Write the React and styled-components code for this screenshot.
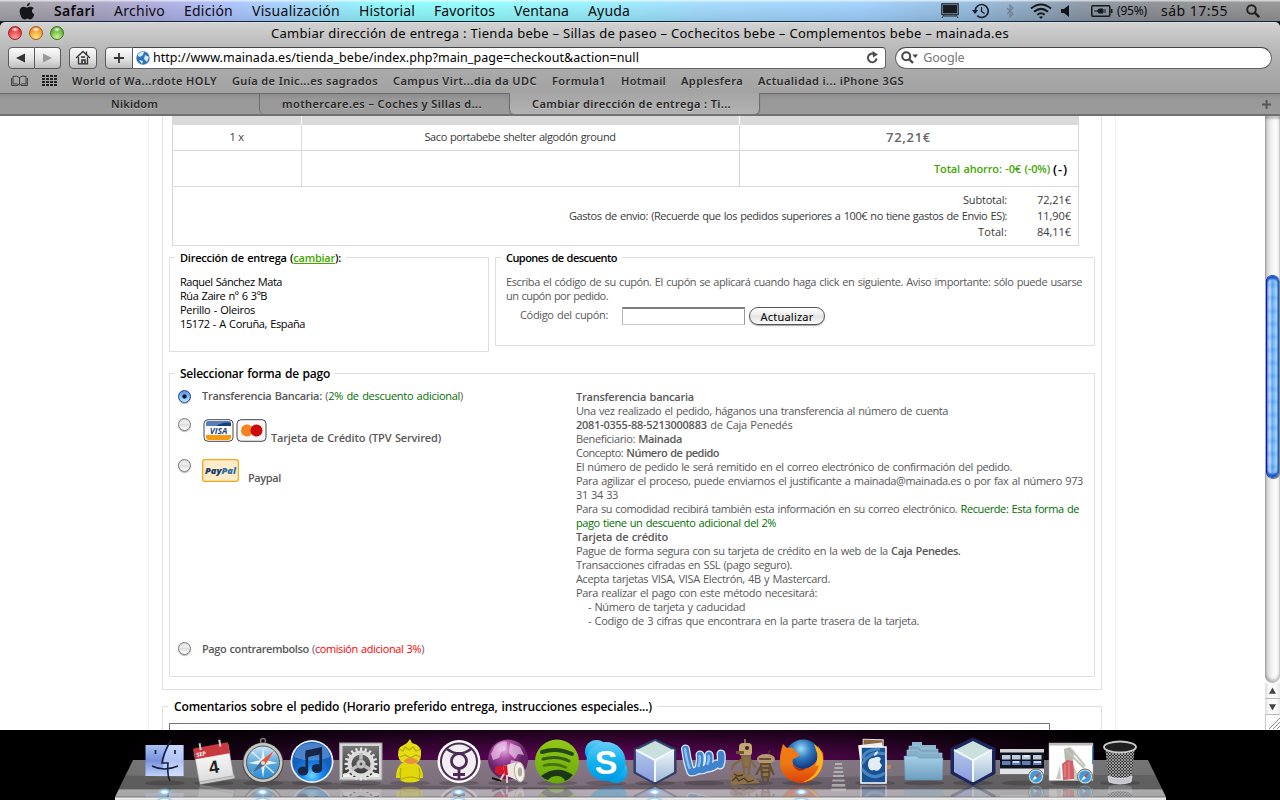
import React, { useLayoutEffect, useRef, useState } from 'react';
import styled, { createGlobalStyle, css } from 'styled-components';

const GlobalStyle = createGlobalStyle`
  * { box-sizing: border-box; }
  html, body { margin: 0; padding: 0; }
  body { width: 1280px; height: 800px; overflow: hidden; background: #000; }
`;

const ui = '"Noto Sans", "Open Sans", sans-serif';
const web = '"Open Sans", "Noto Sans", sans-serif';

/* ---------- text that is tracked to a given measure ---------- */

const Run = styled.span`
  display: inline-block;
  white-space: pre;
  flex: none;
  font-weight: ${(p) => (p.$bold ? 600 : 'inherit')};
  font-size: ${(p) => (p.$size ? `${p.$size}px` : 'inherit')};
  color: ${(p) => p.$color || 'inherit'};
`;

const Strong = styled.b`
  font-weight: 600;
`;

function Fit({ w, bold, size, color, children }) {
  const ref = useRef(null);
  const [tracking, setTracking] = useState(0);
  useLayoutEffect(() => {
    const el = ref.current;
    const natural = el.getBoundingClientRect().width;
    setTracking((w - natural) / el.textContent.length);
  }, [w]);
  return (
    <Run ref={ref} $bold={bold} $size={size} $color={color} style={{ letterSpacing: `${tracking}px` }}>
      {children}
    </Run>
  );
}

/* ---------- menu bar ---------- */

const Desktop = styled.div`
  display: flex;
  flex-direction: column;
  width: 1280px;
  height: 800px;
  overflow: hidden;
  background: #000;
`;

const MenuBar = styled.header`
  display: flex;
  align-items: center;
  justify-content: space-between;
  height: 22px;
  padding: 0 20px 0 19px;
  border-bottom: 1px solid #10263c;
  font: 14px/20px ${ui};
  color: #0c0c10;
  background:
    linear-gradient(rgba(255, 255, 255, 0.6) 0 1px, rgba(255, 255, 255, 0.08) 2px, rgba(0, 0, 0, 0.1)),
    linear-gradient(90deg, #a3a3a8 0, #a6a1b0 60px, #abaade 150px, #abc2ff 230px, #a0dcff 310px, #8cfaff 380px, #92ffff 480px, #97f0ff 600px, #a2dcff 700px, #a0d2ff 860px, #93b9dc 980px, #8996a6 1080px, #8b8d92 1150px, #939393 1280px);
`;

const MenuGroup = styled.div`
  display: flex;
  align-items: center;
  gap: 19px;
`;

const Extras = styled.div`
  display: flex;
  align-items: center;
`;

const Extra = styled.div`
  display: flex;
  width: ${(p) => p.$w}px;
  margin-left: ${(p) => p.$ml || 0}px;
`;

/* ---------- browser window ---------- */

const Chrome = styled.div`
  height: 71px;
  border-radius: 5px 5px 0 0;
  background: linear-gradient(#d2d2d2, #bababa 24px, #a9a9a9 50px, #a3a3a3);
  border-top: 1px solid #dedede;
`;

const TitleBar = styled.div`
  position: relative;
  display: flex;
  justify-content: center;
  height: 23px;
  font: 13px/21px ${ui};
  color: #050505;
`;

const Lights = styled.div`
  position: absolute;
  left: 8px;
  top: 3px;
  display: flex;
  gap: 7px;
`;

const Light = styled.span`
  width: 14px;
  height: 14px;
  border-radius: 50%;
  border: 1px solid ${(p) => p.$edge};
  background:
    radial-gradient(ellipse 4px 2.5px at 50% 20%, rgba(255, 255, 255, 0.95), transparent),
    radial-gradient(circle at 50% 85%, ${(p) => p.$glow}, ${(p) => p.$tone} 75%);
`;

const Toolbar = styled.div`
  display: flex;
  align-items: center;
  height: 23px;
  padding: 0 8px;
`;

const Button = styled.div`
  display: flex;
  align-items: center;
  justify-content: center;
  width: ${(p) => p.$w}px;
  height: 22px;
  margin-right: ${(p) => p.$mr || 0}px;
  border: 1px solid #5b5b5b;
  border-left-width: ${(p) => (p.$joined ? 0 : 1)}px;
  border-radius: ${(p) => p.$radius || '4px'};
  background: linear-gradient(#fcfcfc, #e2e2e2 55%, #bdbdbd);
`;

const AddressField = styled.div`
  display: flex;
  align-items: center;
  justify-content: space-between;
  width: 754px;
  height: 22px;
  margin-right: 9px;
  padding: 0 6px 0 3px;
  border: 1px solid #666;
  border-top-color: #444;
  border-left: 0;
  border-radius: 0 4px 4px 0;
  background: #fff;
  font: 12.5px/20px ${ui};
  color: #000;
`;

const Address = styled.div`
  display: flex;
  align-items: center;
  gap: 3px;
`;

const SearchField = styled.div`
  display: flex;
  align-items: center;
  gap: 5px;
  width: 377px;
  height: 22px;
  padding-left: 5px;
  border: 1px solid #666;
  border-top-color: #444;
  border-radius: 11px;
  background: #fff;
  font: 12.5px/20px ${ui};
  color: #777;
`;

const Bookmarks = styled.div`
  display: flex;
  align-items: center;
  gap: 15px;
  height: 24px;
  padding-left: 11px;
  font: 600 11px/24px ${ui};
  color: #2a2a2a;
  text-shadow: 0 1px 0 rgba(255, 255, 255, 0.35);
`;

const BookmarkIcon = styled.span`
  display: flex;
  width: ${(p) => p.$w}px;
  margin-right: ${(p) => p.$mr || 0}px;
`;

const Tabs = styled.nav`
  display: flex;
  height: 23px;
  background: linear-gradient(#8c8c8c, #989898 5px, #9c9c9c);
  border-top: 1px solid #6a6a6a;
  border-bottom: 2px solid #707070;
  font: 600 11px/20px ${ui};
  color: #262626;
  text-shadow: 0 1px 0 rgba(255, 255, 255, 0.35);
`;

const Tab = styled.div`
  display: flex;
  width: ${(p) => p.$w}px;
  padding-left: ${(p) => p.$pad}px;
  border-left: ${(p) => (p.$first ? 0 : '1px solid #6e6e6e')};
  border-radius: 0 0 0 5px;
  ${(p) =>
    p.$active &&
    css`
      margin-top: -1px;
      padding-top: 1px;
      border-right: 1px solid #6e6e6e;
      border-radius: 0 0 5px 5px;
      background: linear-gradient(#a5a5a5, #b2b2b2);
      box-shadow: 0 1px 1px #777;
    `}
`;

const NewTab = styled.div`
  display: flex;
  align-items: center;
  margin-left: auto;
  padding-right: 9px;
`;

/* ---------- web page ---------- */

const Viewport = styled.main`
  display: flex;
  height: 614px;
  overflow: hidden;
  background: #fff;
  font: 11px/14px ${web};
  word-spacing: 0.8px;
  color: #585858;
`;

const Sheet = styled.div`
  width: 968px;
  margin-left: 148px;
  margin-right: 149px;
  padding-left: 13px;
  border-left: 1px solid #f0f0f0;
  border-right: 1px solid #f0f0f0;
`;

const Order = styled.section`
  width: 940px;
  height: 574px;
  padding-left: 6px;
  border: 1px solid #dfdfdf;
  border-top: 0;
`;

const Cart = styled.div`
  width: 907px;
  margin-left: 3px;
  border: 1px solid #d9d9d9;
  border-top: 0;
  color: #3a3a3a;
`;

const CartRow = styled.div`
  display: grid;
  grid-template-columns: 129px 438px 338px;
  height: ${(p) => p.$h}px;
  border-bottom: ${(p) => (p.$head ? 0 : '1px solid #d9d9d9')};
  background: ${(p) => (p.$head ? '#dadada' : '#fff')};
  & > div { border-right: 1px solid ${(p) => (p.$head ? '#fff' : '#d9d9d9')}; }
  & > div:last-child { border-right: 0; }
`;

const Cell = styled.div`
  display: flex;
  align-items: center;
  gap: 3px;
  justify-content: ${(p) => (p.$end ? 'flex-end' : 'center')};
  padding-right: ${(p) => (p.$end ? 10 : 1)}px;
  padding-bottom: ${(p) => (p.$end ? 0 : 1)}px;
`;

const Totals = styled.div`
  height: 58px;
  padding: 5px 7px 0 0;
`;

const TotalRow = styled.div`
  display: flex;
  justify-content: flex-end;
  gap: 30px;
  height: 16px;
  line-height: 16px;
`;

const Columns = styled.div`
  display: flex;
  align-items: flex-start;
  gap: 6px;
  height: 127px;
  padding-top: 11px;
`;

const Box = styled.section`
  flex: none;
  width: ${(p) => p.$w}px;
  height: ${(p) => p.$h}px;
  padding-left: 5px;
  border: 1px solid #dfdfdf;
`;

const Legend = styled.div`
  width: fit-content;
  height: 16px;
  margin-top: -8px;
  padding: 0 5px;
  background: #fff;
  font-weight: 600;
  font-size: ${(p) => (p.$large ? 12 : 11)}px;
  line-height: 15px;
  color: #000;
`;

const ChangeLink = styled.a`
  color: #42a800;
  text-decoration: underline;
`;

const Lines = styled.div`
  display: flex;
  flex-direction: column;
  align-items: flex-start;
  padding: ${(p) => p.$pad || 0};
  color: ${(p) => p.$color || 'inherit'};
`;

const CouponRow = styled.div`
  display: flex;
  align-items: flex-start;
  padding: 4px 0 0 19px;
  line-height: 16px;
`;

const CouponInput = styled.input`
  width: 123px;
  height: 18px;
  margin: 0 4px 0 14px;
  border: 1px solid #b5b5b5;
  border-top: 2px solid #7c7c7c;
  border-right-color: #999;
  border-bottom-color: #ccc;
  background: #fff;
`;

const PillButton = styled.button`
  width: 76px;
  height: 18px;
  padding: 0;
  border: 1px solid #555;
  border-radius: 9px;
  background: linear-gradient(#fff, #ececec 45%, #e2e2e2 50%, #fbfbfb);
  box-shadow: 0 1px 1px rgba(0, 0, 0, 0.35);
  font: 11px/15px ${ui};
  color: #000;
`;

const Payment = styled.div`
  display: flex;
  height: 258px;
`;

const Options = styled.div`
  width: 401px;
  padding: 7px 0 0 3px;
`;

const Option = styled.label`
  display: flex;
  align-items: ${(p) => (p.$cards ? 'flex-end' : 'flex-start')};
  height: ${(p) => p.$h}px;
`;

const Radio = styled.span`
  flex: none;
  align-self: flex-start;
  width: 13px;
  height: 13px;
  margin: ${(p) => p.$top || 0}px 11px 0 0;
  border: 1px solid ${(p) => (p.$on ? '#2b3f94' : '#777')};
  border-radius: 50%;
  background: ${(p) =>
    p.$on
      ? 'radial-gradient(circle at 50% 50%, #06142e 0 1.6px, transparent 2.6px), linear-gradient(#5e8fe0, #7dbdf8 50%, #c0f0ff)'
      : 'linear-gradient(#dcdcdc, #f2f2f2 35%, #dedede 50%, #fff)'};
  box-shadow: 0 1px 1px rgba(0, 0, 0, 0.3);
`;

const CardIcons = styled.span`
  display: flex;
  gap: 2px;
  margin-left: ${(p) => p.$ml || 0}px;
  margin-right: ${(p) => p.$mr}px;
  padding-bottom: ${(p) => p.$pb}px;
`;

const Comments = styled.section`
  width: 940px;
  height: 60px;
  margin-top: 16px;
  padding-left: 6px;
  border: 1px solid #dfdfdf;
`;

const CommentLegend = styled(Legend)`
  position: relative;
  margin-left: -1px;
  padding-left: 6px;
`;

const CommentArea = styled.div`
  width: 881px;
  height: 40px;
  margin-top: 8px;
  border: 1px solid #777;
`;

/* ---------- scroll bar ---------- */

const ScrollBar = styled.aside`
  display: flex;
  flex-direction: column;
  width: 15px;
  height: 614px;
  background: #fff;
`;

const Track = styled.div`
  height: 567px;
  padding-top: 159px;
  border-radius: 0 0 8px 8px;
  background: linear-gradient(90deg, #bdbdbd, #dcdcdc 3px, #f3f3f3 7px, #fdfdfd 11px, #ededed);
  box-shadow: inset 0 -3px 3px rgba(0, 0, 0, 0.25), inset 0 3px 2px rgba(0, 0, 0, 0.2);
`;

const Thumb = styled.div`
  width: 13px;
  height: 203px;
  margin-left: 1px;
  border: 1px solid #2557b4;
  border-left: 1px solid #0a18bb;
  border-radius: 6px;
  background:
    repeating-linear-gradient(rgba(255, 255, 255, 0.14) 0 5px, rgba(0, 70, 200, 0.07) 9px, rgba(255, 255, 255, 0.14) 13px),
    linear-gradient(90deg, #8fb5ec 0, #b5d0f5 3px, #8dbcf3 4px, #4e9df0 5px, #7ac0fc 8px, #a2e6ff 10px, #6fa7d4);
  box-shadow: inset 0 3px 2px #1a56c6, inset 0 -3px 2px #1a56c6, 1px 1px 1px #777;
`;

const Arrow = styled.div`
  display: flex;
  align-items: center;
  justify-content: center;
  height: 16px;
  border-bottom: 1px solid #bbb;
  background: linear-gradient(90deg, #ddd, #fafafa 4px 11px, #e8e8e8);
`;

const Grip = styled.div`
  display: flex;
  height: 15px;
  border-left: 1px solid #ccc;
`;

/* ---------- dock ---------- */

const DockArea = styled.footer`
  position: relative;
  height: 70px;
  overflow: hidden;
  background:
    linear-gradient(rgba(0, 0, 0, 0.65), transparent 26px),
    radial-gradient(ellipse 500px 95px at 620px 30px, #64045c, #42053f 45%, #190318 75%, #000);
`;

const Shelf = styled.div`
  position: absolute;
  inset: 30px 114px 0 115px;
  clip-path: polygon(18px 0, calc(100% - 18px) 0, 100% 37px, 100% 100%, 0 100%, 0 37px);
  background: linear-gradient(
    rgba(150, 150, 150, 0.78) 0,
    rgba(135, 135, 135, 0.8) 29px,
    rgba(200, 200, 200, 0.85) 30px,
    rgba(196, 196, 196, 0.85) 36px,
    #777 37px,
    #f2f2f2 38px,
    #e0e0e0 40px
  );
`;

const Sweep = styled.div`
  height: 29px;
  clip-path: polygon(0 15px, 280px 25px, 400px 27px, 500px 29px, 0 29px);
  background: rgba(50, 50, 50, 0.28);
`;

const SweepRight = styled.div`
  height: 29px;
  margin-top: -29px;
  clip-path: polygon(390px 29px, 650px 18px, 850px 15px, 100% 15px, 100% 29px);
  background: rgba(50, 50, 50, 0.24);
`;

const DockItems = styled.div`
  position: relative;
  display: flex;
  padding-left: 140px;
`;

const DockSvg = styled.svg`
  flex: none;
  width: 49px;
  height: 70px;
  overflow: visible;
`;

const DividerSvg = styled(DockSvg)`
  width: 24px;
`;

function DockIcon({ running, name, label, children }) {
  return (
    <DockSvg viewBox="0 0 49 70" aria-label={name}>
      <defs>
        <clipPath id={`reflect-${name}`}><rect x="0" y="54" width="49" height="13" /></clipPath>
        <radialGradient id={`lamp-${name}`}>
          <stop offset="0" stopColor="#fff" /><stop offset=".35" stopColor="#e4f5ff" /><stop offset=".6" stopColor="#8cc8f6" stopOpacity=".75" /><stop offset="1" stopColor="#8cc8f6" stopOpacity="0" />
        </radialGradient>
      </defs>
      <g clipPath={`url(#reflect-${name})`} opacity=".28"><g transform="matrix(1 0 0 -1 0 109)">{children}</g></g>
      <ellipse cx="25" cy="53" rx="20" ry="2.5" fill="#000" opacity=".18" />
      {children}
      {label}
      {running && <><ellipse cx="24.5" cy="62" rx="8" ry="4" fill={`url(#lamp-${name})`} /><ellipse cx="24.5" cy="70" rx="9" ry="3" fill={`url(#lamp-${name})`} /></>}
    </DockSvg>
  );
}

const Gradient = ({ id, from, to, mid }) => (
  <linearGradient id={id} x1="0" y1="0" x2="0" y2="1">
    <stop offset="0" stopColor={from} />{mid && <stop offset=".5" stopColor={mid} />}<stop offset="1" stopColor={to} />
  </linearGradient>
);

const Finder = () => (
  <g>
    <Gradient id="finder" from="#a9c3f5" mid="#7791df" to="#bfd2fa" />
    <rect x="5.500" y="15" width="38" height="31" fill="url(#finder)" />
    <path d="M29 15h14.500v31H29l-1-8h-5q1-13 6-23z" fill="#dbe6ff" opacity=".6" />
    <path d="M31 10Q23 24 22 33h6q-1 12 2 18" fill="none" stroke="#17213d" strokeWidth="1.600" />
    <path d="M15.500 20v4M35 20v4M12 36q12 6 26 0" fill="none" stroke="#17213d" strokeWidth="1.700" />
  </g>
);

const Calendar = () => (
  <g transform="rotate(-10 25 32)">
    <Gradient id="calendar" from="#fff" to="#ddd" />
    <path d="M7 47h36v5H7z" fill="#ccc" stroke="#666" strokeWidth=".6" />
    <rect x="7" y="17" width="35" height="32" fill="url(#calendar)" stroke="#888" strokeWidth=".5" />
    <rect x="7" y="15" width="35" height="11" fill="#c83a40" />
    <path d="M14 11v7M34 11v7" stroke="#ccc" strokeWidth="2" />
  </g>
);

const CalendarDate = () => (
  <g transform="rotate(-10 25 32)">
    <text x="9" y="24" fontFamily="Open Sans" fontWeight="700" fontSize="5.500" fill="#fff">SEP</text>
    <text x="24" y="43" textAnchor="middle" fontFamily="Liberation Sans" fontWeight="700" fontSize="18" fill="#222">4</text>
  </g>
);

const Compass = () => (
  <g>
    <Gradient id="compass" from="#cfe6f8" mid="#5ba8dc" to="#2d8fd4" />
    <circle cx="25" cy="11" r="2.500" fill="none" stroke="#777" strokeWidth="1.500" />
    <circle cx="25" cy="33" r="20.500" fill="#4b4b4b" />
    <circle cx="25" cy="32.500" r="19.500" fill="#c9c9c4" />
    <circle cx="25" cy="32.500" r="16.500" fill="url(#compass)" stroke="#555" />
    <path d="M25 18l2 12 13 3-13 2-2 13-2-13-13-2 13-3z" fill="#e5f1f9" />
    <path d="M14 22l9 8M36 22l-9 8M14 43l9-8M36 43l-9-8" stroke="#dcedf7" strokeWidth="1.500" />
    <path d="M36 21L27 35l-4-4z" fill="#ee5029" /><path d="M13 44L23 31l4 4z" fill="#476a8c" />
    <circle cx="25" cy="33" r="2" fill="#ddd" />
  </g>
);

const Music = () => (
  <g>
    <radialGradient id="music" cy=".85"><stop offset="0" stopColor="#70d9ff" /><stop offset=".5" stopColor="#1685ed" /><stop offset="1" stopColor="#1560bd" /></radialGradient>
    <circle cx="25" cy="31.500" r="21.500" fill="#e5edf5" />
    <circle cx="25" cy="31.500" r="19.800" fill="url(#music)" />
    <path d="M7 27q3-14 18-14t18 14q-17 7-36 0z" fill="#fff" opacity=".22" />
    <path d="M18.500 20.500L35 17v7l-16.500 3.500z" fill="#182747" />
    <path d="M19.800 23v18M33.700 20v18" stroke="#182747" strokeWidth="2.700" />
    <ellipse cx="16" cy="41" rx="5.300" ry="4.500" fill="#182747" /><ellipse cx="30" cy="38.500" rx="5.300" ry="4.500" fill="#182747" />
  </g>
);

const teeth = Array.from({ length: 20 }, (_, i) => i * 18);

const Gears = () => (
  <g>
    <Gradient id="gears" from="#777" to="#333" />
    <rect x="3.500" y="13" width="42.500" height="37" fill="#d6d6d6" stroke="#999" />
    <rect x="6.500" y="16" width="36.500" height="31" fill="url(#gears)" />
    {teeth.map((a) => <rect key={a} x="24" y="17.500" width="2.200" height="5" fill="#e4e4e4" transform={`rotate(${a} 25 34)`} />)}
    <circle cx="25" cy="34" r="11.500" fill="none" stroke="#dcdcdc" strokeWidth="4" />
    <path d="M25 34V23M25 34l-9.500 5.500M25 34l9.500 5.500" stroke="#bdbdbd" strokeWidth="3.500" />
    <circle cx="25" cy="34" r="4.500" fill="#c4c4c4" stroke="#888" strokeWidth=".6" />
    <path d="M7 44a6 6 0 0 1 9 3H7zM43 44a6 6 0 0 0-9 3h9z" fill="#eee" />
    <circle cx="25" cy="34" r="1.500" fill="#555" />
  </g>
);

const Duck = () => (
  <g>
    <path d="M17 33q-6 4-6 15h4l1 3q9 3 18 0l1-3h3q0-12-7-15z" fill="#e0d80a" />
    <path d="M25 9l2 4q10 2 9 12 0 9-11 9t-12-9q0-8 4-9l5-3z" fill="#e6dd16" />
    <path d="M14 19l4 2 2-4 4 3 4-3 3 4 5-2M15 27l5-2 5 3 6-3 4 2" fill="none" stroke="#b7ac04" strokeWidth="1.300" />
    <ellipse cx="26" cy="31" rx="7" ry="3" fill="#e8913d" />
    <path d="M16 38q-2 5 0 12M34 38q2 5 0 12M17 49q8-4 17 0" fill="none" stroke="#aaa300" />
  </g>
);

const Mercury = () => (
  <g>
    <circle cx="25" cy="31.500" r="21.500" fill="#fff" />
    <circle cx="25" cy="31.500" r="18" fill="#f3edf4" stroke="#4c2c57" strokeWidth="2" />
    <circle cx="25" cy="31" r="7.500" fill="none" stroke="#4c2c57" strokeWidth="2.800" />
    <path d="M13 19q12 9 24 0M25 39v11M19 44.500h12" fill="none" stroke="#4c2c57" strokeWidth="2.800" />
  </g>
);

const Globe = () => (
  <g>
    <radialGradient id="globe" cx=".4" cy=".25"><stop offset="0" stopColor="#e7b8e4" /><stop offset=".5" stopColor="#a74ba1" /><stop offset="1" stopColor="#632365" /></radialGradient>
    <circle cx="25" cy="29.500" r="20" fill="url(#globe)" />
    <path d="M12 16q7-6 12-4l-1 7-5 3-2 6-6 2-2-6zM27 13l10 4 4 8-6-1-3 5-6-6zM28 30l9 2-4 8-6-4z" fill="#f3cfef" opacity=".65" />
    <path d="M12 38q2-3 9-2l2 9q-7 1-11-3z" fill="#d3172b" />
    <path d="M20 36l14-4 4 20-16-7z" fill="#ece6dc" /><path d="M20 36l4-1 1 10-3 0z" fill="#d3172b" />
    <ellipse cx="36.500" cy="42" rx="5" ry="10" fill="#f3eee6" stroke="#b8afa4" transform="rotate(-6 36 42)" />
    <ellipse cx="37" cy="42" rx="2.200" ry="4.500" fill="#b5a99b" />
    <path d="M21 44l-5 8M24 45v8" stroke="#f0c2bb" strokeWidth="2" /><path d="M9 48l9 3" stroke="#111" strokeWidth="2" />
  </g>
);

const Spotify = () => (
  <g>
    <Gradient id="spotify" from="#90c719" to="#6ba907" />
    <circle cx="25" cy="31.500" r="22" fill="url(#spotify)" />
    <path d="M10 22q15-5 30 2" stroke="#244816" strokeWidth="4" fill="none" strokeLinecap="round" />
    <path d="M11 29q14-4 26 2" stroke="#345e13" strokeWidth="3" fill="none" strokeLinecap="round" />
    <path d="M12 35.500q12-3 22 2" stroke="#43730f" strokeWidth="2.500" fill="none" strokeLinecap="round" />
    <path d="M9 46q16-12 32-1-3 4-8 6-2-5-8-5t-9 4q-4-1-7-4z" fill="#1b3716" />
  </g>
);

const Skype = () => (
  <g>
    <Gradient id="skype" from="#67cdf5" mid="#12b2ee" to="#0099e5" />
    <circle cx="15.500" cy="21.500" r="11.500" fill="url(#skype)" /><circle cx="35" cy="41.500" r="11.500" fill="url(#skype)" />
    <circle cx="25" cy="31.500" r="19.500" fill="url(#skype)" />
  </g>
);

const SkypeLetter = () => (
  <text x="25" y="44" textAnchor="middle" fontFamily="Liberation Sans" fontWeight="700" fontSize="34" fill="#fff">S</text>
);

const Cube = ({ id, dark }) => (
  <g>
    <Gradient id={`${id}l`} from="#b1c5e8" to="#8a9ce0" /><Gradient id={`${id}r`} from="#eef5fa" to="#9db8d5" />
    <path d="M25 9l21 10v24L25 54 4 43V19z" fill={dark ? '#1d275b' : '#37486f'} stroke={dark ? '#1d275b' : '#253562'} strokeWidth={dark ? 3 : 1} strokeLinejoin="round" />
    <path d="M25 11l18 9-18 9-18-9z" fill="#cae0dc" />
    <path d="M6 21l18 9v22L6 42z" fill={`url(#${id}l)`} /><path d="M44 21l-18 9v22l18-10z" fill={`url(#${id}r)`} />
    <path d="M6 20l19 10 19-10M25 30v22" fill="none" stroke="#f3faff" strokeWidth="2" />
  </g>
);

const WORD_STROKE = 'M6.500 19q2 15 5.500 23 6 0 8-4 2-8 1-13M21 40q6 0 8-4 2-6 1-11M30 38q5-1 7-4M42 24q1 6-1 11';

const Word = () => (
  <g fill="none" strokeLinecap="round" strokeLinejoin="round">
    <path d={WORD_STROKE} stroke="#d9edff" strokeWidth="9" />
    <path d={WORD_STROKE} stroke="#3f83cc" strokeWidth="6.500" />
    <path d="M6 19q2 13 4.500 19M20.500 26q1 5-1 10M29.500 26q1 4-1 8" stroke="#8cc0f0" strokeWidth="2.500" />
  </g>
);

const Robots = () => (
  <g>
    <path d="M2 45l8-5 8 4 10 4 4 5-29 2z" fill="#8b704b" /><path d="M4 51l4-4 3 4 5-3 4 4 6-2M6 44l4 2 5-1" stroke="#4a3925" strokeWidth="1.300" fill="none" />
    <path d="M17 9v5" stroke="#a08b62" strokeWidth="1.500" /><rect x="11" y="13" width="13" height="13" rx="4" fill="#c4a574" />
    <rect x="8" y="21" width="8" height="3" fill="#6d5536" /><circle cx="19" cy="18" r="2" fill="#332a1d" />
    <path d="M14 26h8v11h-7zM14 29l-9 6-1 5M22 29l6 9M16 37v8M21 37v8" fill="#89704b" stroke="#806641" strokeWidth="2" />
    <ellipse cx="38" cy="29" rx="9" ry="5" fill="#b59871" /><path d="M40 24l2-4M31 29h12" stroke="#4a3a25" strokeWidth="1.500" />
    <path d="M33 34h9l-1 13h-7zM33 36l-5 9M42 36l4 9M35 47v6M40 47v6" fill="#8e744c" stroke="#674e31" strokeWidth="2" />
    <path d="M34 38h7M34 42h7" stroke="#372b1a" />
  </g>
);

const Firefox = () => (
  <g>
    <radialGradient id="fxglobe" cx=".45" cy=".25"><stop offset="0" stopColor="#9fdcf6" /><stop offset=".5" stopColor="#327dc0" /><stop offset="1" stopColor="#163c87" /></radialGradient>
    <Gradient id="fox" from="#f27a18" mid="#ec7913" to="#dc3f0c" />
    <circle cx="26" cy="28" r="18.500" fill="url(#fxglobe)" />
    <path d="M6 14l4 4q6-2 8 3l4 3q0 3-6 5-2 6 5 9 8 3 16-4 6-6 4-18l5 7q2 14-6 23-8 8-18 7Q9 51 4 40 1 29 6 14z" fill="url(#fox)" />
    <path d="M37 14q9 6 9 17-2 18-20 21 14-6 16-17-3 1-4 1 3-5 2-13z" fill="#f9b523" />
    <path d="M15 34q6 7 15 4-9 7-15-4z" fill="#a62d0b" />
  </g>
);

const Photos = () => (
  <g>
    <rect x="13" y="9.500" width="20" height="22" fill="#8b6a43" stroke="#ddd" transform="rotate(1 22 20)" />
    <rect x="10" y="14" width="24" height="34" fill="#eee" transform="rotate(-7 20 30)" />
    <path d="M37 35h4v4h-4z" fill="#bd815a" />
    <rect x="11" y="17" width="25" height="36" fill="#185293" stroke="#fff" strokeWidth="1.500" />
    <path d="M12 34q8-14 23-10M12 39q10 13 23 4M13 29q0-9 17-10" fill="none" stroke="#69a6d8" strokeWidth="3" opacity=".6" />
    <path d="M24 28q5-3 7 1-3 3 1 6-3 8-8 5-5 2-6-5 0-8 6-7zM24 26q0-4 4-5 0 4-4 5z" fill="#e5edf4" />
  </g>
);

const Folders = () => (
  <g>
    <Gradient id="folder" from="#a7cfe7" to="#6d9dbf" />
    <path d="M13 12h10v3h14v12H13z" fill="#8fb8d1" /><path d="M10 16h10l2 3h17v11H10z" fill="#7ca9c5" stroke="#a7cce0" strokeWidth=".6" />
    <path d="M8 20h11l2 3h22v11H8z" fill="#85b0ca" stroke="#b1d2e4" strokeWidth=".6" />
    <path d="M5 26h13l2 2h24v1l-.500 21H6z" fill="url(#folder)" stroke="#628da9" strokeWidth=".5" />
  </g>
);

const MiniSafari = () => (
  <g><circle cx="39" cy="46.500" r="7.500" fill="#ddd" stroke="#666" /><circle cx="39" cy="46.500" r="6" fill="#3b9dde" /><path d="M43 42l-3 6-2-2z" fill="#f03b23" /><path d="M35 51l3-5 2 2z" fill="#fff" /></g>
);

const BrowserThumb = () => (
  <g>
    <rect x="3" y="19" width="44" height="25" fill="#0d1420" /><rect x="3" y="19" width="44" height="3.500" fill="#d2d2d2" />
    <rect x="3" y="38.500" width="44" height="5.500" fill="#e2e3e8" />
    {[5, 15, 25, 36].map((x) => <g key={x}><rect x={x} y="25" width="8.500" height="4.500" fill="#bcc9da" /><rect x={x} y="31" width="8.500" height="4" fill="#617eb5" /></g>)}
    <path d="M16 32h6M27 26h5M37 32h7" stroke="#f4f5ff" strokeWidth="1.500" />
    <MiniSafari />
  </g>
);

const PageThumb = () => (
  <g>
    <rect x="3" y="13" width="44" height="37.500" fill="#fff" stroke="#aaa" strokeWidth=".5" /><rect x="3" y="13" width="44" height="2.500" fill="#bbb" />
    <rect x="46" y="16" width="1.200" height="18" fill="#3189ce" />
    <path d="M18 19l6-2 4 7-1 7h-8z" fill="#b3bbb0" /><path d="M16 34l5-4 6 1 2 18-12 1z" fill="#cf6067" />
    <path d="M14 35l-4 14h5zM28 36l6 14h-6z" fill="#c9c9c4" /><path d="M20 20l18 18M25 19l14 17" stroke="#c2c2bc" strokeWidth="2" />
    <path d="M19 34v13M23 32v17" stroke="#ef8e91" />
    <MiniSafari />
  </g>
);

const Bin = () => (
  <g>
    <pattern id="mesh" width="3" height="3" patternUnits="userSpaceOnUse"><rect width="3" height="3" fill="#3a3a3a" /><path d="M0 0l3 3M3 0L0 3" stroke="#bbb" strokeWidth=".7" /></pattern>
    <path d="M10 17l4 34q11 4 22 0l4-34z" fill="url(#mesh)" />
    <path d="M13 46q12 5 24 0l-1 6q-11 4-22 0z" fill="#c7c7d4" stroke="#eee" strokeWidth=".7" />
    <ellipse cx="25" cy="17" rx="16" ry="5.500" fill="#202020" stroke="#c9c9c9" strokeWidth="1.800" />
  </g>
);

/* ---------- small drawings ---------- */

const AppleMark = () => (
  <svg width="16" height="18" viewBox="0 0 16 18"><path d="M11 .5Q10.800 4 7.800 4.500 7.800 1.500 11 .5zM8 5.700Q10 4.500 12 4.700q2 .3 2.700 1.600-4 2.700.6 6.300-1.700 4.800-4 4.900-1 0-2.900-.9-2 1-3 .9Q2.500 17 1 12-.3 6 3.500 4.900 5 4.500 8 5.700z" fill="#15151c" /></svg>
);

const Magnifier = ({ size, color }) => (
  <svg width={size} height={size} viewBox="0 0 14 14"><circle cx="5.500" cy="5.500" r="4.300" fill="none" stroke={color} strokeWidth="1.900" /><path d="M8.700 8.700l4.500 4.500" stroke={color} strokeWidth="2.400" /></svg>
);

const Tri = ({ d, color, w = 10, h = 10 }) => <svg width={w} height={h} viewBox="0 0 10 10"><path d={d} fill={color} /></svg>;

function SystemExtras() {
  return (
    <Extras>
      <Extra $w={18}><svg width="18" height="15" viewBox="0 0 18 15"><rect x=".7" y=".7" width="16.600" height="11" fill="#181c20" stroke="#2b3036" /><rect x="1.700" y="1.700" width="14.600" height="9" fill="none" stroke="#8a9db0" strokeWidth=".7" /><path d="M3 12l-2 3M15 12l2 3M3 13h12" stroke="#20262c" fill="none" /></svg></Extra>
      <Extra $w={18} $ml={13}><svg width="18" height="16" viewBox="0 0 18 16"><path d="M3.200 8a6.500 6.500 0 1 1 2 4.700" fill="none" stroke="#1d2024" strokeWidth="1.700" /><path d="M0 7h6.200L3 11z" fill="#1d2024" /><path d="M9.500 4v4.500l3 2" fill="none" stroke="#1d2024" strokeWidth="1.300" /></svg></Extra>
      <Extra $w={10} $ml={16}><svg width="9" height="14" viewBox="0 0 9 14"><path d="M1 4l6 6-3 3V1l3 3-6 6" fill="none" stroke="#71818f" strokeWidth="1.200" /></svg></Extra>
      <Extra $w={22} $ml={14}><svg width="22" height="16" viewBox="0 0 22 16"><path d="M1 5.500q10-8 20 0M4 8.700q7-5.600 14 0M7.300 11.700q3.700-3 7.400 0" fill="none" stroke="#15191d" strokeWidth="2" /><path d="M9 14q2-1.500 4 0l-2 2z" fill="#15191d" /></svg></Extra>
      <Extra $w={9} $ml={9}><svg width="9" height="12" viewBox="0 0 9 12"><path d="M0 4h3l5-4v12L3 8H0z" fill="#111418" /></svg></Extra>
      <Extra $w={22} $ml={21}><svg width="22" height="12" viewBox="0 0 22 12"><rect x=".8" y=".8" width="18" height="10.400" rx="1" fill="none" stroke="#16191c" strokeWidth="1.500" /><path d="M20 4v4h1.500V4z" fill="#16191c" /><path d="M3 5.500h3l2-2h4v1h3v1h-3v1h3v1h-3v1H8l-2-2H3z" fill="#16191c" /></svg></Extra>
      <Extra $w={30} $ml={4}><Fit w={30} size={12}>(95%)</Fit></Extra>
      <Extra $w={67} $ml={14}><Fit w={67}>sáb 17:55</Fit></Extra>
      <Extra $w={14} $ml={18}><Magnifier size={14} color="#202020" /></Extra>
    </Extras>
  );
}

const menus = [['Archivo', 51], ['Edición', 49], ['Visualización', 88], ['Historial', 56], ['Favoritos', 61], ['Ventana', 55], ['Ayuda', 42]];
const bookmarks = [['World of Wa...rdote HOLY', 145], ['Guía de Inic...es sagrados', 146], ['Campus Virt...dia da UDC', 144], ['Formula1', 54], ['Hotmail', 45], ['Applesfera', 62], ['Actualidad i... iPhone 3GS', 146]];

function BrowserChrome() {
  return (
    <>
      <Chrome>
        <TitleBar>
          <Lights>
            <Light $edge="#8d2a2a" $glow="#ff9c9c" $tone="#e3292d" />
            <Light $edge="#a65a1b" $glow="#ffe680" $tone="#f08c1f" />
            <Light $edge="#3e7a22" $glow="#c9f58e" $tone="#54a82f" />
          </Lights>
          <Fit w={738}>Cambiar dirección de entrega : Tienda bebe – Sillas de paseo – Cochecitos bebe – Complementos bebe – mainada.es</Fit>
        </TitleBar>
        <Toolbar>
          <Button $w={27} $radius="4px 0 0 4px"><Tri d="M9 .5v9L0 5z" color="#333" /></Button>
          <Button $w={26} $mr={8} $joined $radius="0 4px 4px 0"><Tri d="M1 .5v9L10 5z" color="#999" /></Button>
          <Button $w={28} $mr={8}>
            <svg width="16" height="15" viewBox="0 0 16 15"><path d="M1 8l7-6.500L15 8M3.500 7v6.800h9V7M11.500 1.500v3" fill="none" stroke="#333" strokeWidth="1.300" /><path d="M7 14v-4h3v4M6 7h4" fill="none" stroke="#333" strokeWidth="1.600" /></svg>
          </Button>
          <Button $w={28} $radius="4px 0 0 4px"><svg width="10" height="10" viewBox="0 0 10 10"><path d="M5 0v10M0 5h10" stroke="#333" strokeWidth="1.800" /></svg></Button>
          <AddressField>
            <Address>
              <svg width="14" height="14" viewBox="0 0 14 14"><circle cx="7" cy="7" r="6.700" fill="#2f73b8" /><path d="M2 3q4-3 6-2L7 4 4 6 2 5zM9 4l4 2-2 5-3-3zM3 9l4 1-1 3z" fill="#d4ebfa" /></svg>
              <Fit w={486}>http://www.mainada.es/tienda_bebe/index.php?main_page=checkout&amp;action=null</Fit>
            </Address>
            <svg width="13" height="13" viewBox="0 0 13 13"><path d="M10.500 7.500A4.300 4.300 0 1 1 8 3" fill="none" stroke="#4d4d4d" strokeWidth="2" /><path d="M6.500 0L12 3.500 7 6.500z" fill="#4d4d4d" /></svg>
          </AddressField>
          <SearchField>
            <svg width="17" height="13" viewBox="0 0 17 13"><circle cx="5.200" cy="5.200" r="4" fill="none" stroke="#444" strokeWidth="2" /><path d="M8 8l4 4" stroke="#444" strokeWidth="2.400" /><path d="M11.500 3.500H17L14.200 7z" fill="#444" /></svg>
            <Fit w={41}>Google</Fit>
          </SearchField>
        </Toolbar>
        <Bookmarks>
          <BookmarkIcon $w={17} $mr={-1}><svg width="17" height="12" viewBox="0 0 17 12"><path d="M8.500 2.500Q6 .2 2 1.500v7.500q4-1 6.500 1 2.500-2 6.500-1V1.500q-4-1.300-6.500 1v7M.6 3v7.500h6.500M16.400 3v7.500H9.900" fill="none" stroke="#333" strokeWidth=".9" /></svg></BookmarkIcon>
          <BookmarkIcon $w={15}><svg width="15" height="12" viewBox="0 0 15 12">{[0, 3, 6, 9].map((y) => [0, 4, 8, 12].map((x) => <rect key={`${x}${y}`} x={x} y={y} width="3" height="2" fill="#222" />))}</svg></BookmarkIcon>
          {bookmarks.map(([label, w]) => <Fit key={label} w={w}>{label}</Fit>)}
        </Bookmarks>
      </Chrome>
      <Tabs>
        <Tab $w={259} $first $pad={111}><Fit w={47}>Nikidom</Fit></Tab>
        <Tab $w={250} $pad={22}><Fit w={200}>mothercare.es – Coches y Sillas d...</Fit></Tab>
        <Tab $w={251} $active $pad={22}><Fit w={199}>Cambiar dirección de entrega : Ti...</Fit></Tab>
        <NewTab><svg width="9" height="9" viewBox="0 0 9 9"><path d="M4.500 0v9M0 4.500h9" stroke="#555" strokeWidth="2" /></svg></NewTab>
      </Tabs>
    </>
  );
}

function Product() {
  return (
    <Cart>
      <CartRow $head $h={9}><div /><div /><div /></CartRow>
      <CartRow $h={26}>
        <Cell><Fit w={14}>1 x</Fit></Cell>
        <Cell><Fit w={191}>Saco portabebe shelter algodón ground</Fit></Cell>
        <Cell><Fit w={45} bold size={13} color="#666">72,21€</Fit></Cell>
      </CartRow>
      <CartRow $h={36}>
        <Cell /><Cell />
        <Cell $end><Fit w={116} bold color="#42a800">Total ahorro: -0€ (-0%)</Fit><Fit w={15} bold size={13} color="#000">(-)</Fit></Cell>
      </CartRow>
      <Totals>
        <TotalRow><Fit w={44}>Subtotal:</Fit><Fit w={34}>72,21€</Fit></TotalRow>
        <TotalRow><Fit w={438}>Gastos de envio: (Recuerde que los pedidos superiores a 100€ no tiene gastos de Envio ES):</Fit><Fit w={34}>11,90€</Fit></TotalRow>
        <TotalRow><Fit w={29}>Total:</Fit><Fit w={34}>84,11€</Fit></TotalRow>
      </Totals>
    </Cart>
  );
}

function PaymentBox() {
  return (
    <Box $w={926} $h={304}>
      <Legend $large><Fit w={150}>Seleccionar forma de pago</Fit></Legend>
      <Payment>
        <Options>
          <Option $h={28}><Radio $on $top={1} /><Fit w={261}><Strong>Transferencia Bancaria:</Strong> (<Run $color="#007000">2% de descuento adicional</Run>)</Fit></Option>
          <Option $h={28} $cards>
            <Radio $top={1} />
            <CardIcons $ml={1} $mr={4} $pb={3}>
              <svg width="31" height="23" viewBox="0 0 31 23">
                <rect x="1" y=".7" width="29" height="21.600" rx="4" fill="#fff" stroke="#444" />
                <path d="M3 7V4q0-2 2-2h21q2 0 2 2v3z" fill="#5b7db5" /><path d="M13 7q8-5 15-3v3z" fill="#15407f" />
                <path d="M3 16h25v2q0 3-3 3H6q-3 0-3-3z" fill="#f79a10" />
                <text x="15.500" y="14.500" textAnchor="middle" fontFamily="Open Sans" fontWeight="700" fontStyle="italic" fontSize="8.500" fill="#1c4589">VISA</text>
              </svg>
              <svg width="31" height="23" viewBox="0 0 31 23"><rect x="1" y=".7" width="29" height="21.600" rx="4" fill="#f7f7f7" stroke="#444" /><circle cx="11" cy="11.500" r="6" fill="#f58220" /><circle cx="20.500" cy="11.500" r="6" fill="#cc0a0a" /></svg>
            </CardIcons>
            <Fit w={170}><Strong>Tarjeta de Crédito (TPV Servired)</Strong></Fit>
          </Option>
          <Option $h={40} $cards>
            <Radio $top={14} />
            <CardIcons $mr={9} $pb={3}>
              <svg width="37" height="23" viewBox="0 0 37 23"><rect x=".6" y=".6" width="35.800" height="21.800" rx="2.500" fill="#feebc7" stroke="#f8a61c" strokeWidth="1.300" /><text x="3" y="14.500" fontFamily="Open Sans" fontWeight="800" fontStyle="italic" fontSize="9" fill="#193b68" textLength="31" lengthAdjust="spacingAndGlyphs">Pay<tspan fill="#2d6ba5">Pal</tspan></text></svg>
            </CardIcons>
            <Fit w={33}><Strong>Paypal</Strong></Fit>
          </Option>
        </Options>
        <Lines $pad="8px 0 0">
          <Fit w={118} bold>Transferencia bancaria</Fit>
          <Fit w={372}>Una vez realizado el pedido, háganos una transferencia al número de cuenta</Fit>
          <Fit w={216.500}><Strong>2081-0355-88-5213000883</Strong> de Caja Penedés</Fit>
          <Fit w={106}>Beneficiario: <Strong>Mainada</Strong></Fit>
          <Fit w={143}>Concepto: <Strong>Número de pedido</Strong></Fit>
          <Fit w={436}>El número de pedido le será remitido en el correo electrónico de confirmación del pedido.</Fit>
          <Fit w={507}>Para agilizar el proceso, puede enviarnos el justificante a mainada@mainada.es o por fax al número 973</Fit>
          <Fit w={42}>31 34 33</Fit>
          <Fit w={503}>Para su comodidad recibirá también esta información en su correo electrónico. <Run $color="#007000">Recuerde: Esta forma de</Run></Fit>
          <Fit w={200} color="#007000">pago tiene un descuento adicional del 2%</Fit>
          <Fit w={92} bold>Tarjeta de crédito</Fit>
          <Fit w={384.500}>Pague de forma segura con su tarjeta de crédito en la web de la <Strong>Caja Penedes.</Strong></Fit>
          <Fit w={216}>Transacciones cifradas en SSL (pago seguro).</Fit>
          <Fit w={254}>Acepta tarjetas VISA, VISA Electrón, 4B y Mastercard.</Fit>
          <Fit w={241}>Para realizar el pago con este método necesitará:</Fit>
          <Lines $pad="0 0 0 12px">
            <Fit w={157}>- Número de tarjeta y caducidad</Fit>
            <Fit w={331}>- Codigo de 3 cifras que encontrara en la parte trasera de la tarjeta.</Fit>
          </Lines>
        </Lines>
      </Payment>
      <Lines $pad="2px 0 0 3px">
        <Option $h={20}><Radio /><Fit w={222}><Strong>Pago contrarembolso</Strong> (<Run $color="#f00">comisión adicional 3%</Run>)</Fit></Option>
      </Lines>
    </Box>
  );
}

function CheckoutPage() {
  return (
    <Sheet>
      <Order>
        <Product />
        <Columns>
          <Box $w={320} $h={95}>
            <Legend><Fit w={161}>Dirección de entrega (<ChangeLink>cambiar</ChangeLink>):</Fit></Legend>
            <Lines $pad="9px 0 0 5px" $color="#000">
              <Fit w={102}>Raquel Sánchez Mata</Fit>
              <Fit w={87}>Rúa Zaire nº 6 3ºB</Fit>
              <Fit w={75}>Perillo - Oleiros</Fit>
              <Fit w={125}>15172 - A Coruña, España</Fit>
            </Lines>
          </Box>
          <Box $w={600} $h={89}>
            <Legend><Fit w={111}>Cupones de descuento</Fit></Legend>
            <Lines $pad="9px 0 0 5px">
              <Fit w={576}>Escriba el código de su cupón. El cupón se aplicará cuando haga click en siguiente. Aviso importante: sólo puede usarse</Fit>
              <Fit w={102}>un cupón por pedido.</Fit>
            </Lines>
            <CouponRow><Fit w={88}>Código del cupón:</Fit><CouponInput /><PillButton><Fit w={53}>Actualizar</Fit></PillButton></CouponRow>
          </Box>
        </Columns>
        <PaymentBox />
      </Order>
      <Comments>
        <CommentLegend $large><Fit w={478}>Comentarios sobre el pedido (Horario preferido entrega, instrucciones especiales...)</Fit></CommentLegend>
        <CommentArea />
      </Comments>
    </Sheet>
  );
}

function Dock() {
  return (
    <DockArea>
      <Shelf><Sweep /><SweepRight /></Shelf>
      <DockItems>
        <DockIcon name="finder" running><Finder /></DockIcon>
        <DockIcon name="calendar" label={<CalendarDate />}><Calendar /></DockIcon>
        <DockIcon name="safari" running><Compass /></DockIcon>
        <DockIcon name="music"><Music /></DockIcon>
        <DockIcon name="preferences"><Gears /></DockIcon>
        <DockIcon name="duck"><Duck /></DockIcon>
        <DockIcon name="mercury" running><Mercury /></DockIcon>
        <DockIcon name="globe"><Globe /></DockIcon>
        <DockIcon name="spotify"><Spotify /></DockIcon>
        <DockIcon name="skype" label={<SkypeLetter />}><Skype /></DockIcon>
        <DockIcon name="cube" running><Cube id="cubeA" /></DockIcon>
        <DockIcon name="word"><Word /></DockIcon>
        <DockIcon name="robots"><Robots /></DockIcon>
        <DockIcon name="firefox" running><Firefox /></DockIcon>
        <DividerSvg viewBox="0 0 24 70">
          {[33, 37, 41, 45, 49.5, 54, 58.5].map((y, i) => <rect key={y} x={9 - i * 0.65} y={y} width={7 + i * 1.3} height={i > 4 ? 2.6 : 2} fill="#c8c8c8" opacity=".7" />)}
        </DividerSvg>
        <DockIcon name="photos"><Photos /></DockIcon>
        <DockIcon name="folders"><Folders /></DockIcon>
        <DockIcon name="project"><Cube id="cubeB" dark /></DockIcon>
        <DockIcon name="browser"><BrowserThumb /></DockIcon>
        <DockIcon name="page"><PageThumb /></DockIcon>
        <DockIcon name="bin"><Bin /></DockIcon>
      </DockItems>
    </DockArea>
  );
}

export default function App() {
  return (
    <>
      <GlobalStyle />
      <Desktop>
        <MenuBar>
          <MenuGroup>
            <AppleMark />
            <Fit w={41} bold>Safari</Fit>
            {menus.map(([label, w]) => <Fit key={label} w={w}>{label}</Fit>)}
          </MenuGroup>
          <SystemExtras />
        </MenuBar>
        <BrowserChrome />
        <Viewport>
          <CheckoutPage />
          <ScrollBar>
            <Track><Thumb /></Track>
            <Arrow><Tri d="M5 0l5 9H0z" color="#444" w={7} h={8} /></Arrow>
            <Arrow><Tri d="M5 10l5-9H0z" color="#444" w={7} h={8} /></Arrow>
            <Grip><svg width="14" height="15" viewBox="0 0 14 15"><path d="M3 14L14 3M7 14l7-7M11 14l3-3" stroke="#888" /></svg></Grip>
          </ScrollBar>
        </Viewport>
        <Dock />
      </Desktop>
    </>
  );
}
